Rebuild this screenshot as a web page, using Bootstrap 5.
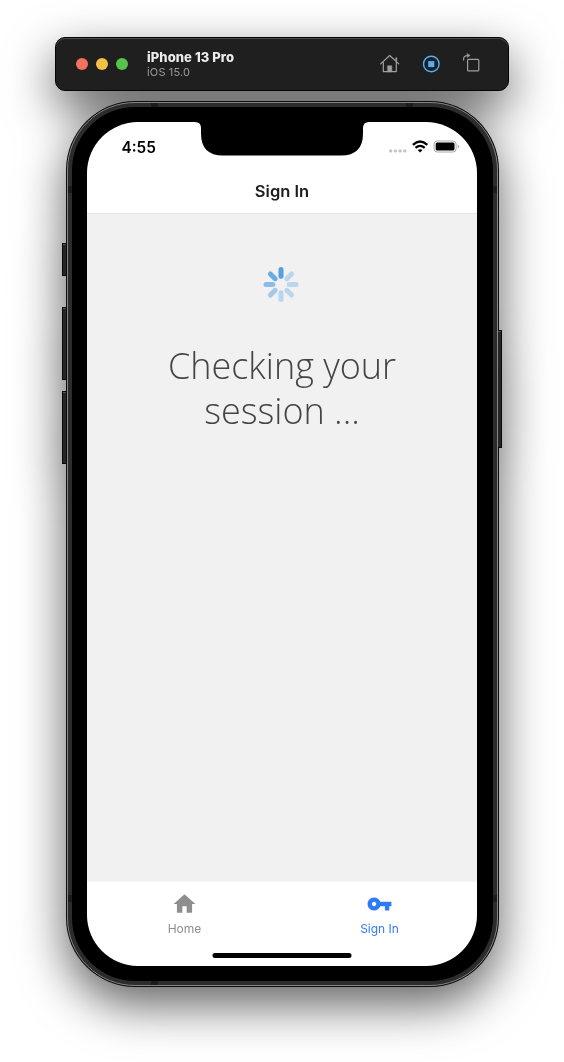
<!DOCTYPE html>
<html lang="en">
<head>
<meta charset="utf-8">
<meta name="viewport" content="width=device-width, initial-scale=1">
<title>Sign In</title>
<link href="https://cdn.jsdelivr.net/npm/bootstrap@5.3.0/dist/css/bootstrap.min.css" rel="stylesheet">
<style>
  body { font-family: Inter, "Liberation Sans", sans-serif; background: #fff; width: 564px; height: 1062px; }
  svg { display: block; }
  .simulator { padding: 37px 55px 0; filter: drop-shadow(0 18px 24px rgba(0,0,0,.62)); }
  .sim-bar { height: 54px; background: #1f1f1f; border: 1px solid #050505; border-radius: 10px; box-shadow: inset 0 1px 0 #4a4a4a; padding: 0 28px 0 20px; }
  .light { width: 12px; height: 12px; }
  .sim-label { margin-left: 19px; }
  .sim-name { font-size: 13px; line-height: 15px; font-weight: 800; letter-spacing: .08px; color: #ececec; }
  .sim-os { font-size: 11px; line-height: 14px; letter-spacing: .15px; color: #9b9b9b; }
  .phone { width: 433px; height: 886px; margin: 10px 0 0 11px; padding: 1px; border-radius: 69px; background: #0d0d0d; }
  .rim { border: 1px solid #858585; border-radius: 68px; background: #2c2c2c; padding: 4px; }
  .bezel { background: #000; border-radius: 63px; padding: 15px; }
  .screen { width: 390px; height: 844px; border-radius: 51px; background: #fff; }
  .hw { background: #262626; border: 1px solid #0a0a0a; box-shadow: inset 0 1px 0 #555; width: 5px; z-index: 0; }
  .band { background: #1c1c1c; }
  .status { height: 50px; padding: 0 17px 0 34.5px; }
  .clock { font-size: 15.3px; font-weight: 600; color: #000; line-height: 20px; padding-top: 1px; }
  .page-head { height: 42px; line-height: 39px; font-size: 16.5px; font-weight: 600; color: #1c1c1e; border-bottom: 1px solid #e5e5e5; }
  .page-body { background: #f1f1f1; padding-top: 52px; }
  .message { font-family: "Open Sans", sans-serif; font-weight: 300; font-size: 36px; line-height: 45px; color: #444; margin-top: 41px; }
  .tabs { height: 85px; border-top: 1px solid #f7f7f7; padding-top: 9px; }
  .tab-item { font-size: 12px; line-height: 16px; color: #8e8e8f; }
  .tab-item svg { transform: translateX(-.5px); }
  .tab-item.current { color: #2f7bf6; }
  .home-line { width: 139px; height: 5px; border-radius: 3px; background: #000; bottom: 8px; }
</style>
</head>
<body>
<div class="simulator">
  <header class="sim-bar d-flex align-items-center">
    <div class="d-flex gap-2">
      <span class="light rounded-circle" style="background:#f1735c"></span>
      <span class="light rounded-circle" style="background:#f8bf45"></span>
      <span class="light rounded-circle" style="background:#58c24d"></span>
    </div>
    <div class="sim-label me-auto">
      <div class="sim-name">iPhone 13 Pro</div>
      <div class="sim-os">iOS 15.0</div>
    </div>
    <div class="d-flex">
      <svg width="101" height="22" viewBox="379 52.500 101 22" fill="none" stroke="#a0a0a0" stroke-width="1.2" stroke-linecap="round" stroke-linejoin="round">
        <path d="M380.600 63.400l9.100-8.400 9.100 8.400M383.300 61.900v9.200h13v-9.200"/>
        <path d="M396.300 60.400v-3.400" stroke-width="1.700" stroke-linecap="butt"/>
        <path d="M387.800 65.300h4v6h-4z" fill="#a0a0a0" stroke-width=".6"/>
        <circle cx="431.300" cy="63.500" r="7.800" stroke="#4eb0ff" stroke-width="1.400"/>
        <rect x="428.200" y="60.600" width="6.100" height="6" fill="#4eb0ff" stroke="none"/>
        <rect x="467.600" y="58.900" width="11.200" height="11.500" rx="1"/>
        <path d="M463.600 59.400v-1q0-3.400 4.500-3.400"/><path d="M467.400 53.200l2.800 1.800-2.800 1.800z" fill="#a0a0a0" stroke-width=".5"/>
      </svg>
    </div>
  </header>

  <main class="phone position-relative">
    <span class="hw position-absolute" style="left:-4px;top:142px;height:33px"></span>
    <span class="hw position-absolute" style="left:-4px;top:206px;height:73px"></span>
    <span class="hw position-absolute" style="left:-4px;top:290px;height:73px"></span>
    <span class="hw position-absolute" style="right:-3px;top:229px;height:118px"></span>
    <div class="rim position-relative">
      <div class="bezel">
        <div class="screen d-flex flex-column overflow-hidden position-relative">
          <svg class="position-absolute top-0" style="left:108px" width="174" height="34" viewBox="0 0 174 34"><path d="M0 0h174q-6 0-6 6v5.500q0 22-22 22H28q-22 0-22-22V6q0-6-6-6z"/></svg>
          <div class="status d-flex align-items-center justify-content-between">
            <span class="clock">4:55</span>
            <svg width="71" height="16" viewBox="389 139 71 16">
              <g fill="#c4c4c4"><circle cx="390.700" cy="150.900" r="1.700"/><circle cx="395.400" cy="150.900" r="1.700"/><circle cx="400.100" cy="150.900" r="1.700"/><circle cx="404.800" cy="150.900" r="1.700"/></g>
              <g fill="none" stroke="#000" stroke-width="2.300"><path d="M412.900 144.800q7.200-6.700 14.400 0M415.500 147.900q4.600-4.100 9.200 0"/></g>
              <path d="M417.700 150.100q2.400-1.800 4.800 0l-2.400 2.500z"/>
              <rect x="434.100" y="141" width="22" height="11" rx="3" fill="#fff" stroke="#aaa" stroke-width="1"/>
              <rect x="435.700" y="142.600" width="18.800" height="7.900" rx="1.500"/>
              <path d="M457.700 144.600q1.500.7 1.500 1.900t-1.500 1.900z" fill="#aaa"/>
            </svg>
          </div>
          <div class="page-head text-center">Sign In</div>
          <section class="page-body flex-grow-1 text-center">
            <svg class="mx-auto" style="transform:translate(-1px,.5px)" width="36" height="36" viewBox="-18 -18 36 36" stroke-width="5" stroke-linecap="round">
              <path d="M0-8.200V-15" stroke="#579fdd"/>
              <path d="M0-8.200V-15" stroke="#6dacdf" transform="rotate(-45)"/>
              <path d="M0-8.200V-15" stroke="#8abce6" transform="rotate(-90)"/>
              <path d="M0-8.200V-15" stroke="#a5cae9" transform="rotate(-135)"/>
              <path d="M0-8.200V-15" stroke="#bad6ed" transform="rotate(180)"/>
              <path d="M0-8.200V-15" stroke="#bad6ed" transform="rotate(135)"/>
              <path d="M0-8.200V-15" stroke="#bad6ed" transform="rotate(90)"/>
              <path d="M0-8.200V-15" stroke="#bad6ed" transform="rotate(45)"/>
            </svg>
            <div class="message">Checking your<br>session ...</div>
          </section>
          <nav class="tabs row g-0 text-center">
            <div class="col-6 tab-item">
              <svg class="mx-auto mb-1" width="26" height="26" viewBox="0 0 24 24" fill="currentColor"><path d="M10 20v-6h4v6h5v-8h3L12 3 2 12h3v8z"/></svg>
              Home
            </div>
            <div class="col-6 tab-item current">
              <svg class="mx-auto mb-1" width="26" height="26" viewBox="0 0 24 24" fill="currentColor"><path d="M12.650 10C11.830 7.670 9.610 6 7 6c-3.310 0-6 2.690-6 6s2.690 6 6 6c2.610 0 4.830-1.670 5.650-4H17v4h4v-4h2v-4H12.650zM7 14c-1.100 0-2-.9-2-2s.9-2 2-2 2 .9 2 2-.9 2-2 2z"/></svg>
              Sign In
            </div>
          </nav>
          <span class="home-line position-absolute start-50 translate-middle-x"></span>
        </div>
      </div>
    </div>
    <span class="band position-absolute" style="left:85px;top:2px;width:7px;height:4px"></span>
    <span class="band position-absolute" style="right:86px;top:2px;width:7px;height:4px"></span>
    <span class="band position-absolute" style="left:85px;bottom:2px;width:7px;height:4px"></span>
    <span class="band position-absolute" style="left:2px;top:85px;width:4px;height:7px"></span>
    <span class="band position-absolute" style="right:2px;top:85px;width:4px;height:7px"></span>
    <span class="band position-absolute" style="left:2px;bottom:85px;width:4px;height:7px"></span>
    <span class="band position-absolute" style="right:2px;bottom:85px;width:4px;height:7px"></span>
  </main>
</div>
<script src="https://cdn.jsdelivr.net/npm/bootstrap@5.3.0/dist/js/bootstrap.bundle.min.js"></script>
</body>
</html>
